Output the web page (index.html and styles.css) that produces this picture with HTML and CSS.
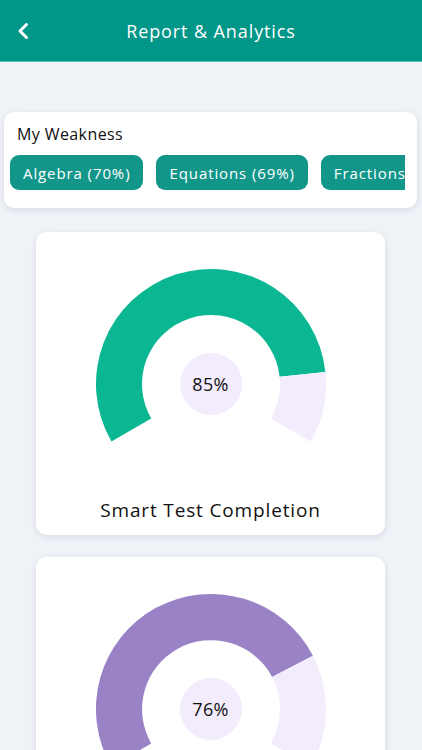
FILE: index.html
```html
<!DOCTYPE html>
<html lang="en">
<head>
<meta charset="utf-8">
<title>Report &amp; Analytics</title>
<link rel="stylesheet" href="styles.css">
</head>
<body>
<header class="topbar">
  <button class="back" aria-label="Back">
    <svg width="14" height="18" viewBox="0 0 14 18"><path d="M10.5 2.5 L4 9 L10.5 15.5" fill="none" stroke="#fff" stroke-width="3" stroke-linecap="round" stroke-linejoin="round"/></svg>
  </button>
  <h1 class="title">Report &amp; Analytics</h1>
</header>
<main class="content">
  <section class="weak-card">
    <h2 class="weak-title">My Weakness</h2>
    <div class="chips">
      <span class="chip">Algebra (70%)</span>
      <span class="chip">Equations (69%)</span>
      <span class="chip">Fractions (65%)</span>
    </div>
  </section>

  <section class="gauge-card">
    <div class="gauge">
      <svg width="232" height="176" viewBox="0 0 232 176">
        <path class="fill-green" d="M16.41 173.5 A115 115 0 1 1 230.37 103.98 L184.62 108.79 A69 69 0 1 0 56.24 150.5 Z"/>
        <path class="fill-rest" d="M230.37 103.98 A115 115 0 0 1 215.59 173.5 L175.76 150.5 A69 69 0 0 0 184.62 108.79 Z"/>
        <circle cx="116" cy="116" r="31" class="fill-rest"/>
      </svg>
      <span class="pct">85%</span>
    </div>
    <p class="gauge-label">Smart Test Completion</p>
  </section>

  <section class="gauge-card">
    <div class="gauge">
      <svg width="232" height="176" viewBox="0 0 232 176">
        <path class="fill-purple" d="M16.41 173.5 A115 115 0 1 1 217.91 62.72 L177.15 84.03 A69 69 0 1 0 56.24 150.5 Z"/>
        <path class="fill-rest" d="M217.91 62.72 A115 115 0 0 1 215.59 173.5 L175.76 150.5 A69 69 0 0 0 177.15 84.03 Z"/>
        <circle cx="116" cy="116" r="31" class="fill-rest"/>
      </svg>
      <span class="pct">76%</span>
    </div>
    <p class="gauge-label">Practice Accuracy</p>
  </section>
</main>
</body>
</html>
```
FILE: styles.css
```css
* { box-sizing: border-box; }
html, body { margin: 0; padding: 0; }
body {
  background: #eff2f7;
  font-family: "Open Sans", Lato, sans-serif;
  color: #111;
  overflow: hidden;
}
.topbar {
  height: 62px;
  background: #009688;
  border-bottom: 1px solid #5cc0b5;
  display: flex;
  align-items: center;
  justify-content: center;
  position: relative;
}
.back {
  position: absolute;
  left: 16px;
  top: 22px;
  background: none;
  border: 0;
  padding: 0;
  width: 14px;
  height: 18px;
  display: flex;
}
.title {
  margin: 0;
  color: #fff;
  font-weight: 400;
  font-size: 18px;
  letter-spacing: 0.9px;
}
.content {
  padding: 50px 5px 0 4px;
  display: flex;
  flex-direction: column;
  align-items: center;
}
.weak-card {
  width: 100%;
  background: #fff;
  border-radius: 10px;
  box-shadow: 0 2px 6px rgba(40, 60, 90, 0.12);
  padding: 12px 12px 18px 6px;
}
.weak-title {
  margin: 0 0 11px 7px;
  font-size: 16px;
  line-height: 20px;
  font-weight: 400;
  letter-spacing: 0.4px;
}
.chips {
  display: flex;
  gap: 13px;
  overflow: hidden;
}
.chip {
  flex: none;
  height: 35px;
  padding: 0 13px;
  border-radius: 9px;
  background: #12968a;
  color: #fff;
  font-size: 15px;
  letter-spacing: 0.9px;
  display: flex;
  align-items: center;
}
.gauge-card {
  margin-top: 24px;
  width: 349px;
  background: #fff;
  border-radius: 11px;
  box-shadow: 0 2px 6px rgba(40, 60, 90, 0.12);
  padding: 36px 0 13px;
  display: flex;
  flex-direction: column;
  align-items: center;
}
.gauge-card + .gauge-card { margin-top: 22px; }
.gauge {
  position: relative;
  width: 232px;
  height: 176px;
}
.gauge svg { display: block; }
.fill-green { fill: #0bb793; }
.fill-purple { fill: #9a82c6; }
.fill-rest { fill: #f2ecfc; }
.pct {
  position: absolute;
  left: 0;
  right: 0;
  top: 104px;
  text-align: center;
  font-size: 18px;
  line-height: 24px;
  letter-spacing: 0.3px;
}
.gauge-label {
  margin: 54px 0 0;
  font-size: 19px;
  line-height: 24px;
  letter-spacing: 0.85px;
}
```
